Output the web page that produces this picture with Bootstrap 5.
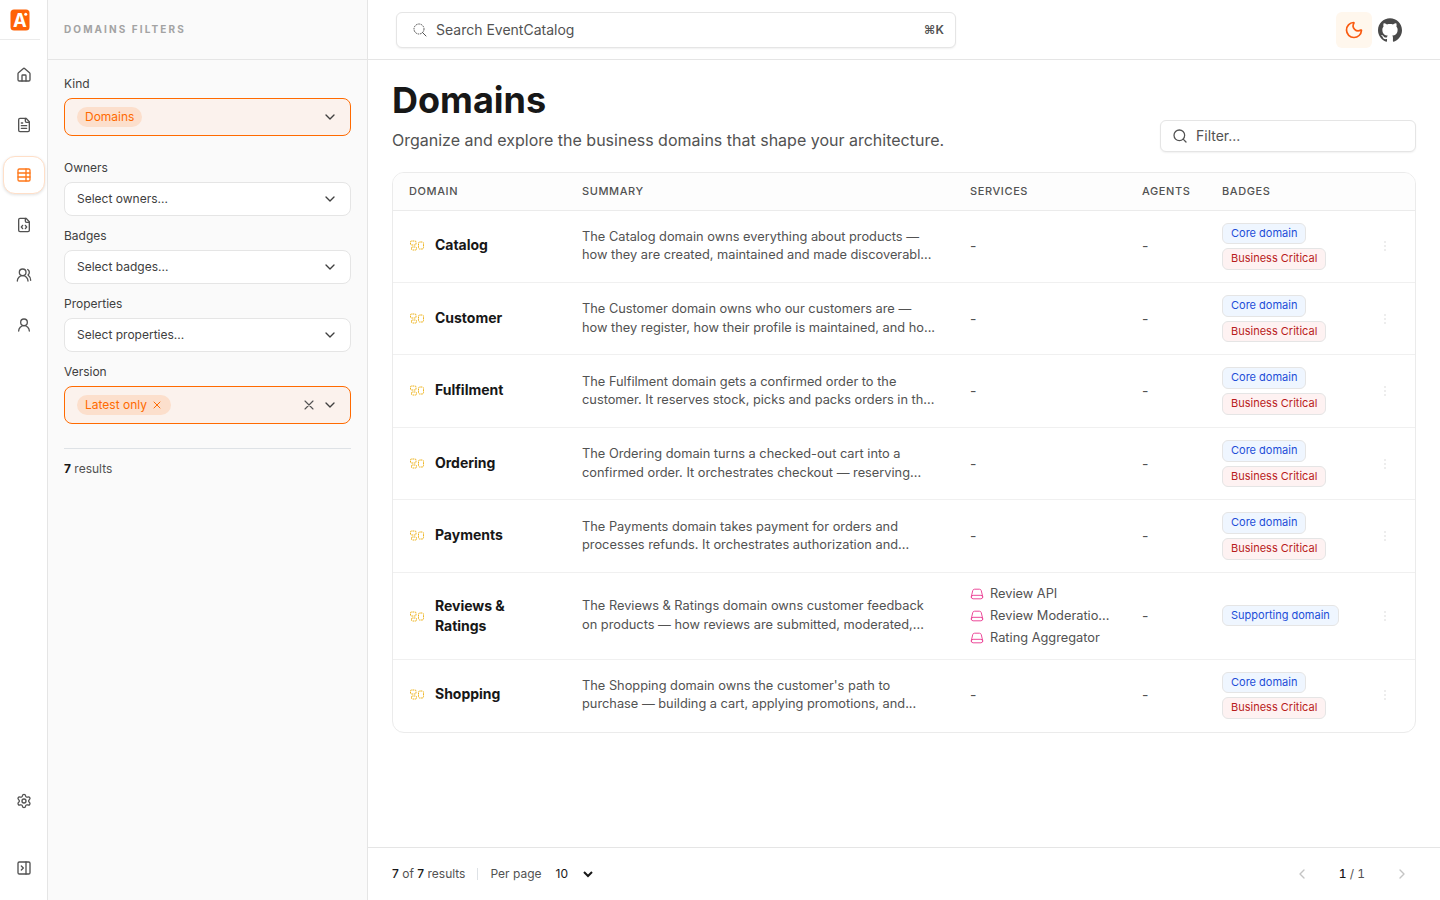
<!DOCTYPE html>
<html lang="en">
<head>
<meta charset="utf-8">
<meta name="viewport" content="width=device-width, initial-scale=1">
<title>Domains - EventCatalog</title>
<link href="https://cdn.jsdelivr.net/npm/bootstrap@5.3.0/dist/css/bootstrap.min.css" rel="stylesheet">
<style>
body{font-family:Inter,"Liberation Sans",sans-serif;font-size:14px;line-height:20px;color:#525252;background:#fff}
svg{display:block;flex:none}
.ic{fill:none;stroke:currentColor;stroke-width:2;stroke-linecap:round;stroke-linejoin:round}
.rail{width:48px;border-right:1px solid #e5e5e5}
.rail-logo{height:40px;width:40px;border-bottom:1px solid #ebebeb;padding:9px 0 0 10px}
.rail-top{gap:14px;padding-top:17px}
.rail-bottom{gap:31px;padding-bottom:14px}
.rail-btn{width:40px;height:36px;color:#525252;margin-left:4px}
.rail-btn.on{color:#ff781a;border:1px solid #ffdfc8;border-radius:12px;background:#fff;box-shadow:0 1px 3px rgba(0,0,0,.12);width:42px;height:38px;margin:-1px 0 -1px 3px}
.filters{width:320px;background:#fafafa;border-right:1px solid #e5e5e5}
.filters-head{height:60px;padding-bottom:2px;border-bottom:1px solid #e5e5e5;font-size:10px;font-weight:700;letter-spacing:2.1px;color:#a3a3a3}
.flabel{font-size:12px;line-height:16px;color:#404040;margin-bottom:6px}
.pick{height:34px;border:1px solid #e5e5e5;border-radius:8px;background:#fff;font-size:12px;color:#404040;margin-bottom:12px}
.pick.on{height:38px;border-color:#ff6a00;background:#fbf2ed;margin-bottom:24px}
.pick .thin{color:#525252;margin-right:5px}
.chip{height:20px;border-radius:10px;background:#fcdfcc;color:#ff6a00;font-size:12px}
.topbar{height:60px;border-bottom:1px solid #e5e5e5;padding:0 34px 0 28px}
.field{border:1px solid #e5e5e5;border-radius:6px;background:#fff;box-shadow:0 1px 2px rgba(0,0,0,.06)}
.search{width:560px;height:36px;padding:0 11px 0 15px}
.kbd-hint{font-size:12px;font-weight:600}
.moon{width:36px;height:36px;border-radius:6px;background:#fff7ed;color:#f95a10}
.page-title{font-size:36px;line-height:40px;font-weight:700;color:#171717}
.sub-title{font-size:16px;line-height:24px}
.filterbox{width:256px;height:32px;padding-left:11px}
.panel{border:1px solid #ebebeb;border-radius:12px;overflow:hidden}
.grid-table{width:100%;table-layout:fixed;border-collapse:separate;border-spacing:0}
.grid-table th{height:37.6px;padding:0 16px 1px;background:#fdfdfd;border-bottom:1px solid #ebebeb;font-size:11px;line-height:16px;font-weight:450;letter-spacing:.6px;color:#525252}
.grid-table td{padding:12px 16px;border-bottom:1px solid #f0f0f0;vertical-align:middle}
.grid-table tr:last-child td{border-bottom-color:transparent}
.dname{font-size:14px;font-weight:700;color:#171717;gap:10px;letter-spacing:-.02px}
.dname.one{padding-bottom:2px}
.dname svg{color:#eeb31c}
.grid-table td.summ{font-size:12.8px;line-height:18.29px;white-space:nowrap}
.pill{font-size:11px;line-height:15.71px;padding:2px 8px;border:1px solid #e5e5e5;border-radius:6px;width:max-content}
.pill-b{background:#eff6ff;color:#1d4ed8}
.pill-r{background:#fef2f2;color:#b91c1c}
.svc{font-size:12.8px;line-height:18px}
.svc svg{color:#ec4899;margin-right:6px}
.foot{height:53px;border-top:1px solid #e5e5e5;font-size:12px;padding:0 24px}
.strong{color:#171717}
.sep{height:12px;margin:0 12px}
.pages{margin:0 29px;font-variant-numeric:tabular-nums}
</style>
</head>
<body>
<svg width="0" height="0" class="position-absolute">
<defs>
<symbol id="dom" viewBox="0 0 24 24"><path fill="none" stroke="currentColor" stroke-width="1.5" stroke-dasharray="2.6 .9" stroke-linejoin="round" d="M2.25 7.500C2.25 6.504 2.754 6 3.750 6h5.250c.9 0 1.500.6 1.500 1.500v3c0 .9-.6 1.500-1.500 1.500h-5.250a1.500 1.500 0 0 1-1.500-1.500v-3ZM14.25 9.500c0-1.200.8-2 2-2h3.500c1.200 0 2 .8 2 2v6.500c0 1.200-.8 2-2 2h-3.500a2 2 0 0 1-2-2v-6.500ZM3.750 16.500c0-.9.6-1.500 1.500-1.500h4.500c.9 0 1.500.6 1.500 1.500v1.500c0 .9-.6 1.500-1.500 1.500h-4.500a1.500 1.500 0 0 1-1.500-1.500v-1.500Z"/></symbol>
<symbol id="srv" viewBox="0 0 24 24"><path fill="none" stroke="currentColor" stroke-width="1.7" stroke-linecap="round" stroke-linejoin="round" d="M21.75 17.25v-.228a4.5 4.5 0 0 0-.12-1.03l-2.268-9.64a3.375 3.375 0 0 0-3.285-2.602H7.923a3.375 3.375 0 0 0-3.285 2.602l-2.268 9.64a4.5 4.5 0 0 0-.12 1.03v.228m19.5 0a3 3 0 0 1-3 3H5.25a3 3 0 0 1-3-3m19.5 0a3 3 0 0 0-3-3H5.25a3 3 0 0 0-3 3"/></symbol>
<symbol id="dots" viewBox="0 0 16 16"><path fill="#b8b8b8" d="M7.500 3.500h1v1h-1zM7.500 7.500h1v1h-1zM7.500 11.500h1v1h-1z"/></symbol>
<symbol id="chev" viewBox="0 0 24 24"><path class="ic" d="m6 9 6 6 6-6"/></symbol>
<symbol id="cross" viewBox="0 0 24 24"><path class="ic" d="M18 6 6 18M6 6l12 12"/></symbol>
</defs>
</svg>
<div class="d-flex vh-100 overflow-hidden">
<nav class="rail d-flex flex-column flex-shrink-0">
  <div class="rail-logo"><svg width="20" height="22" viewBox="0 0 20 22"><rect x=".5" y=".5" width="19" height="21" rx="3.5" fill="#ff6207"/><text x="9.8" y="17.7" text-anchor="middle" font-family="Inter, sans-serif" font-weight="700" font-size="18.5" fill="#fff">A</text><circle cx="15.700" cy="5.300" r="1.500" fill="#fff"/></svg></div>
  <div class="rail-top d-flex flex-column">
    <a class="rail-btn d-flex align-items-center justify-content-center"><svg class="ic" width="16" height="16" viewBox="0 0 24 24"><path d="M15 21v-8a1 1 0 0 0-1-1h-4a1 1 0 0 0-1 1v8"/><path d="M3 10a2 2 0 0 1 .709-1.528l7-6a2 2 0 0 1 2.582 0l7 6A2 2 0 0 1 21 10v9a2 2 0 0 1-2 2H5a2 2 0 0 1-2-2z"/></svg></a>
    <a class="rail-btn d-flex align-items-center justify-content-center"><svg class="ic" width="16" height="16" viewBox="0 0 24 24"><path d="M15 2H6a2 2 0 0 0-2 2v16a2 2 0 0 0 2 2h12a2 2 0 0 0 2-2V7Z"/><path d="M14 2v4a2 2 0 0 0 2 2h4M10 9H8M16 13H8M16 17H8"/></svg></a>
    <a class="rail-btn on d-flex align-items-center justify-content-center"><svg class="ic" width="16" height="16" viewBox="0 0 24 24"><rect x="3" y="3" width="18" height="18" rx="2"/><path d="M15 3v18M3 9h18M3 15h18"/></svg></a>
    <a class="rail-btn d-flex align-items-center justify-content-center"><svg class="ic" width="16" height="16" viewBox="0 0 24 24"><path d="M15 2H6a2 2 0 0 0-2 2v16a2 2 0 0 0 2 2h12a2 2 0 0 0 2-2V7Z"/><path d="M14 2v4a2 2 0 0 0 2 2h4M10 12.5 8 15l2 2.500M14 12.500l2 2.500-2 2.500"/></svg></a>
    <a class="rail-btn d-flex align-items-center justify-content-center"><svg class="ic" width="16" height="16" viewBox="0 0 24 24"><path d="M18 21a8 8 0 0 0-16 0"/><circle cx="10" cy="8" r="5"/><path d="M22 20c0-3.370-2-6.500-4-8a5 5 0 0 0-.450-8.300"/></svg></a>
    <a class="rail-btn d-flex align-items-center justify-content-center"><svg class="ic" width="16" height="16" viewBox="0 0 24 24"><circle cx="12" cy="8" r="5"/><path d="M20 21a8 8 0 0 0-16 0"/></svg></a>
  </div>
  <div class="rail-bottom mt-auto d-flex flex-column">
    <a class="rail-btn d-flex align-items-center justify-content-center"><svg class="ic" width="16" height="16" viewBox="0 0 24 24"><path d="M9.671 4.136a2.340 2.340 0 0 1 4.659 0 2.340 2.340 0 0 0 3.319 1.915 2.340 2.340 0 0 1 2.330 4.033 2.340 2.340 0 0 0 0 3.831 2.340 2.340 0 0 1-2.330 4.033 2.340 2.340 0 0 0-3.319 1.915 2.340 2.340 0 0 1-4.659 0 2.340 2.340 0 0 0-3.320-1.915 2.340 2.340 0 0 1-2.330-4.033 2.340 2.340 0 0 0 0-3.831A2.340 2.340 0 0 1 6.350 6.051a2.340 2.340 0 0 0 3.319-1.915"/><circle cx="12" cy="12" r="3"/></svg></a>
    <a class="rail-btn d-flex align-items-center justify-content-center"><svg class="ic" width="16" height="16" viewBox="0 0 24 24"><rect x="3" y="3" width="18" height="18" rx="2"/><path d="M15 3v18M8 9l3 3-3 3"/></svg></a>
  </div>
</nav>
<aside class="filters flex-shrink-0">
  <div class="filters-head d-flex align-items-center px-3">DOMAINS FILTERS</div>
  <div class="px-3 pt-3">
    <div class="flabel">Kind</div>
    <div class="pick on d-flex align-items-center px-2"><span class="chip px-2 ms-1">Domains</span><svg class="ms-auto me-1" width="16" height="16"><use href="#chev"/></svg></div>
    <div class="flabel">Owners</div>
    <div class="pick d-flex align-items-center px-2"><span class="ms-1">Select owners...</span><svg class="ms-auto me-1" width="16" height="16"><use href="#chev"/></svg></div>
    <div class="flabel">Badges</div>
    <div class="pick d-flex align-items-center px-2"><span class="ms-1">Select badges...</span><svg class="ms-auto me-1" width="16" height="16"><use href="#chev"/></svg></div>
    <div class="flabel">Properties</div>
    <div class="pick d-flex align-items-center px-2"><span class="ms-1">Select properties...</span><svg class="ms-auto me-1" width="16" height="16"><use href="#chev"/></svg></div>
    <div class="flabel">Version</div>
    <div class="pick on d-flex align-items-center px-2"><span class="chip px-2 ms-1 d-flex align-items-center gap-1">Latest only<svg width="12" height="12"><use href="#cross"/></svg></span><svg class="thin ms-auto" width="16" height="16" viewBox="0 0 24 24"><path class="ic" style="stroke-width:1.700" d="M18 6 6 18M6 6l12 12"/></svg><svg class="me-1" width="16" height="16"><use href="#chev"/></svg></div>
    <div class="border-top" style="padding-top:10px;font-size:12px"><b class="strong">7</b> results</div>
  </div>
</aside>
<div class="flex-grow-1 d-flex flex-column">
  <header class="topbar d-flex align-items-center">
    <div class="field search d-flex align-items-center"><svg class="ic" style="stroke-width:1.5" width="16" height="16" viewBox="0 0 24 24"><circle cx="10.500" cy="10.500" r="7.500" stroke-dasharray="2.500 1.200" stroke-linecap="butt"/><path d="m21 21-5.200-5.200"/></svg><span class="ms-2">Search EventCatalog</span><b class="kbd-hint ms-auto">⌘K</b></div>
    <div class="ms-auto moon d-flex align-items-center justify-content-center"><svg class="ic" width="20" height="20" viewBox="0 0 24 24"><path d="M20.985 12.486a9 9 0 1 1-9.473-9.472c.405-.022.617.460.402.803a6 6 0 0 0 8.268 8.268c.344-.215.825-.004.803.401"/></svg></div>
    <svg style="margin:0 4px 0 6px" width="24" height="24" viewBox="0 0 24 24" fill="#4a4a4a"><path d="M12 .297c-6.630 0-12 5.373-12 12 0 5.303 3.438 9.800 8.205 11.385.6.113.82-.258.82-.577 0-.285-.01-1.040-.015-2.040-3.338.724-4.042-1.610-4.042-1.610C4.422 18.070 3.633 17.700 3.633 17.700c-1.087-.744.084-.729.084-.729 1.205.084 1.838 1.236 1.838 1.236 1.070 1.835 2.809 1.305 3.495.998.108-.776.417-1.305.760-1.605-2.665-.3-5.466-1.332-5.466-5.930 0-1.310.465-2.380 1.235-3.220-.135-.303-.540-1.523.105-3.176 0 0 1.005-.322 3.300 1.230.960-.267 1.980-.399 3-.405 1.020.006 2.040.138 3 .405 2.280-1.552 3.285-1.230 3.285-1.230.645 1.653.240 2.873.120 3.176.765.840 1.230 1.910 1.230 3.220 0 4.610-2.805 5.625-5.475 5.920.420.360.810 1.096.810 2.220 0 1.606-.015 2.896-.015 3.286 0 .315.210.690.825.570C20.565 22.092 24 17.592 24 12.297c0-6.627-5.373-12-12-12"/></svg>
  </header>
  <main class="flex-grow-1 px-4" style="padding-top:20px">
    <div class="d-flex justify-content-between align-items-end" style="margin-bottom:20px">
      <div><h1 class="page-title mb-2">Domains</h1><p class="sub-title mb-0">Organize and explore the business domains that shape your architecture.</p></div>
      <div class="field filterbox d-flex align-items-center"><svg class="ic me-2" style="stroke-width:1.900" width="16" height="16" viewBox="0 0 24 24"><circle cx="11" cy="11" r="8"/><path d="m21 21-4.300-4.300"/></svg>Filter...</div>
    </div>
    <div class="panel">
      <table class="grid-table">
        <colgroup><col style="width:173px"><col style="width:388px"><col style="width:172px"><col style="width:80px"><col style="width:155px"><col></colgroup>
        <thead><tr><th>DOMAIN</th><th>SUMMARY</th><th>SERVICES</th><th>AGENTS</th><th>BADGES</th><th></th></tr></thead>
        <tbody>
        <tr><td><div class="dname one d-flex align-items-center"><svg width="16" height="16"><use href="#dom"/></svg><span>Catalog</span></div></td><td class="summ">The Catalog domain owns everything about products —<br>how they are created, maintained and made discoverabl...</td><td>-</td><td>-</td><td><div class="d-flex flex-column gap-1"><span class="pill pill-b">Core domain</span><span class="pill pill-r">Business Critical</span></div></td><td><svg width="16" height="16"><use href="#dots"/></svg></td></tr>
        <tr><td><div class="dname one d-flex align-items-center"><svg width="16" height="16"><use href="#dom"/></svg><span>Customer</span></div></td><td class="summ">The Customer domain owns who our customers are —<br>how they register, how their profile is maintained, and ho...</td><td>-</td><td>-</td><td><div class="d-flex flex-column gap-1"><span class="pill pill-b">Core domain</span><span class="pill pill-r">Business Critical</span></div></td><td><svg width="16" height="16"><use href="#dots"/></svg></td></tr>
        <tr><td><div class="dname one d-flex align-items-center"><svg width="16" height="16"><use href="#dom"/></svg><span>Fulfilment</span></div></td><td class="summ">The Fulfilment domain gets a confirmed order to the<br>customer. It reserves stock, picks and packs orders in th...</td><td>-</td><td>-</td><td><div class="d-flex flex-column gap-1"><span class="pill pill-b">Core domain</span><span class="pill pill-r">Business Critical</span></div></td><td><svg width="16" height="16"><use href="#dots"/></svg></td></tr>
        <tr><td><div class="dname one d-flex align-items-center"><svg width="16" height="16"><use href="#dom"/></svg><span>Ordering</span></div></td><td class="summ">The Ordering domain turns a checked-out cart into a<br>confirmed order. It orchestrates checkout — reserving...</td><td>-</td><td>-</td><td><div class="d-flex flex-column gap-1"><span class="pill pill-b">Core domain</span><span class="pill pill-r">Business Critical</span></div></td><td><svg width="16" height="16"><use href="#dots"/></svg></td></tr>
        <tr><td><div class="dname one d-flex align-items-center"><svg width="16" height="16"><use href="#dom"/></svg><span>Payments</span></div></td><td class="summ">The Payments domain takes payment for orders and<br>processes refunds. It orchestrates authorization and...</td><td>-</td><td>-</td><td><div class="d-flex flex-column gap-1"><span class="pill pill-b">Core domain</span><span class="pill pill-r">Business Critical</span></div></td><td><svg width="16" height="16"><use href="#dots"/></svg></td></tr>
        <tr><td><div class="dname d-flex align-items-center"><svg width="16" height="16"><use href="#dom"/></svg><span>Reviews &amp;<br>Ratings</span></div></td><td class="summ">The Reviews &amp; Ratings domain owns customer feedback<br>on products — how reviews are submitted, moderated,...</td><td><div class="svc d-flex flex-column gap-1 text-nowrap"><span class="d-flex align-items-center"><svg width="14" height="14"><use href="#srv"/></svg>Review API</span><span class="d-flex align-items-center"><svg width="14" height="14"><use href="#srv"/></svg>Review Moderatio...</span><span class="d-flex align-items-center"><svg width="14" height="14"><use href="#srv"/></svg>Rating Aggregator</span></div></td><td>-</td><td><span class="pill pill-b d-block">Supporting domain</span></td><td><svg width="16" height="16"><use href="#dots"/></svg></td></tr>
        <tr><td><div class="dname one d-flex align-items-center"><svg width="16" height="16"><use href="#dom"/></svg><span>Shopping</span></div></td><td class="summ">The Shopping domain owns the customer's path to<br>purchase — building a cart, applying promotions, and...</td><td>-</td><td>-</td><td><div class="d-flex flex-column gap-1"><span class="pill pill-b">Core domain</span><span class="pill pill-r">Business Critical</span></div></td><td><svg width="16" height="16"><use href="#dots"/></svg></td></tr>
        </tbody>
      </table>
    </div>
  </main>
  <footer class="foot d-flex align-items-center">
    <span><span class="strong fw-medium">7</span> of <span class="strong fw-medium">7</span> results</span>
    <span class="sep border-start"></span>
    <span>Per page</span><span class="strong" style="margin-left:14px">10</span>
    <svg class="strong" style="margin-left:14px" width="12" height="12" viewBox="0 0 12 12"><path d="m2 4 4 4 4-4" fill="none" stroke="currentColor" stroke-width="2"/></svg>
    <span class="ms-auto d-flex align-items-center"><svg class="ic" color="#c4c4c4" width="16" height="16" viewBox="0 0 24 24"><path d="m15 18-6-6 6-6"/></svg><span class="pages"><span class="strong fw-medium">1</span> / 1</span><svg class="ic" style="margin-right:6px" color="#c4c4c4" width="16" height="16" viewBox="0 0 24 24"><path d="m9 18 6-6-6-6"/></svg></span>
  </footer>
</div>
</div>
<script src="https://cdn.jsdelivr.net/npm/bootstrap@5.3.0/dist/js/bootstrap.bundle.min.js"></script>
</body>
</html>
